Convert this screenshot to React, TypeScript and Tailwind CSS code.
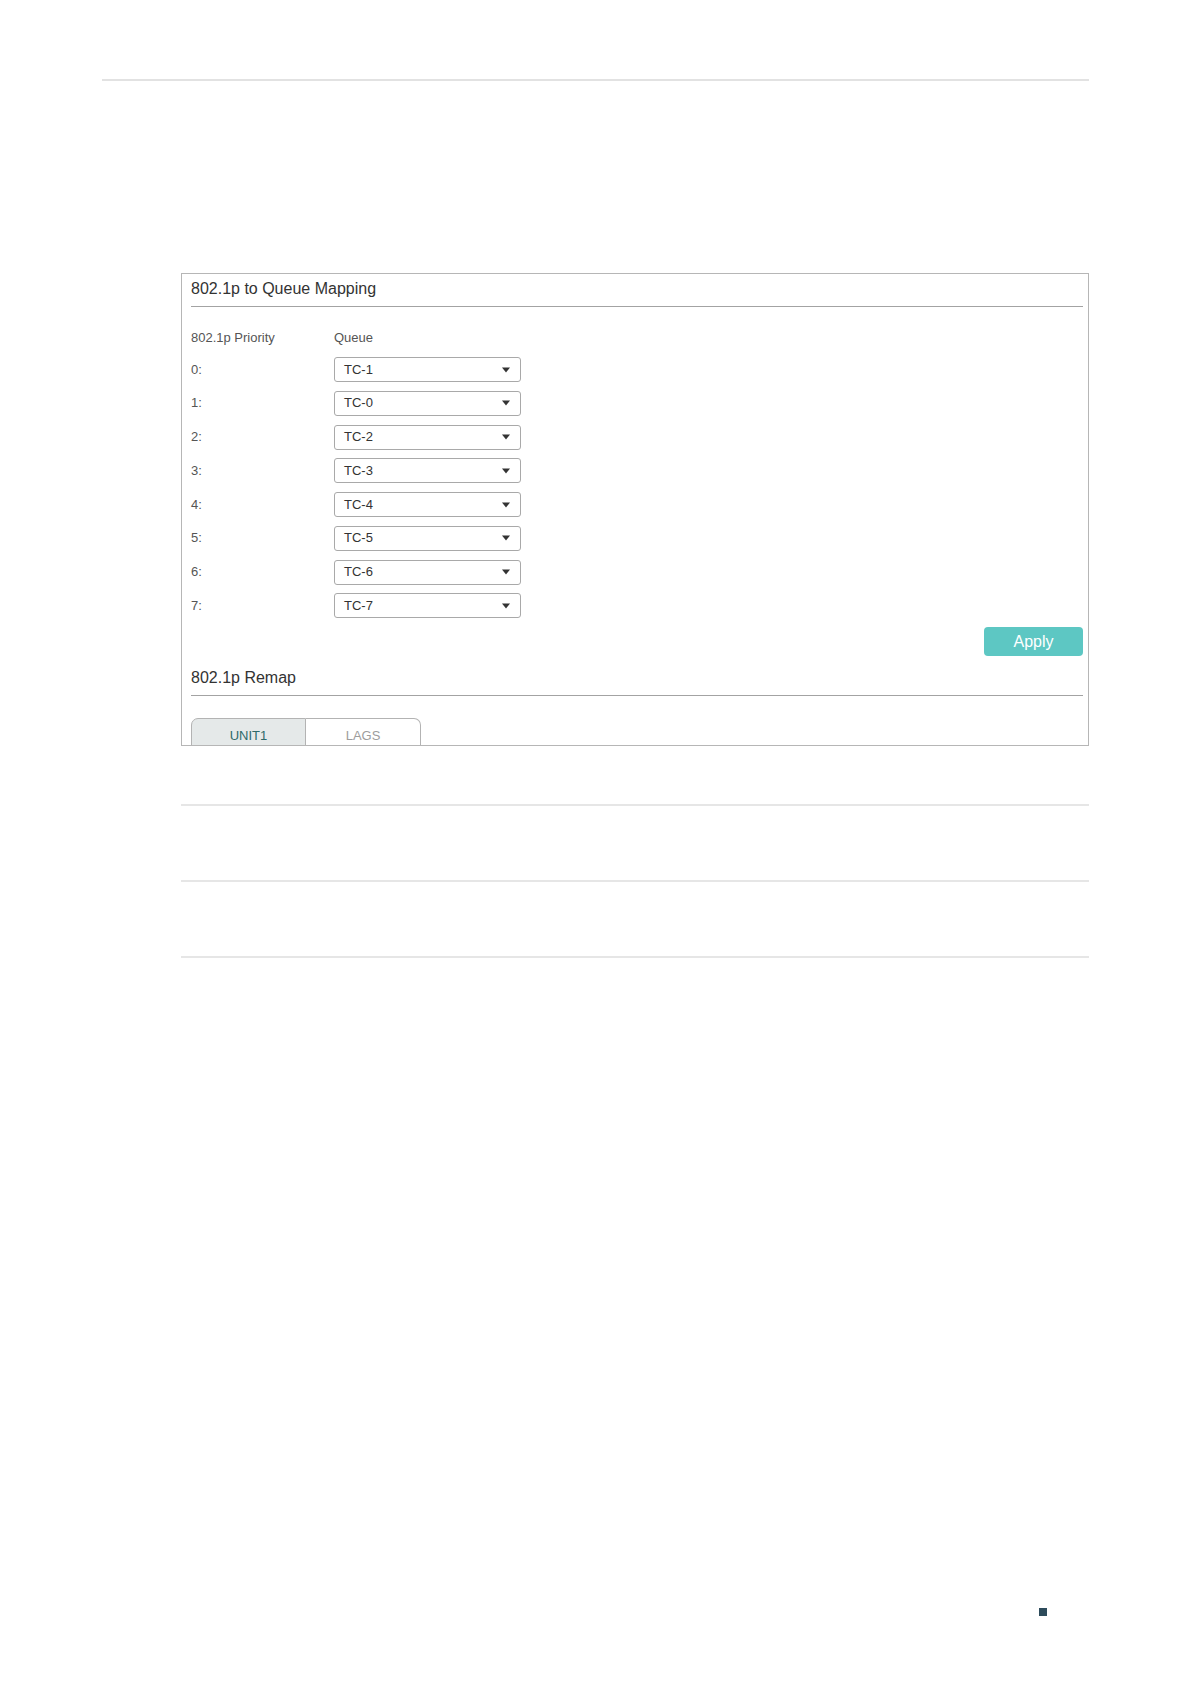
import React from "react";

const mapping = [
  { priority: "0:", queue: "TC-1" },
  { priority: "1:", queue: "TC-0" },
  { priority: "2:", queue: "TC-2" },
  { priority: "3:", queue: "TC-3" },
  { priority: "4:", queue: "TC-4" },
  { priority: "5:", queue: "TC-5" },
  { priority: "6:", queue: "TC-6" },
  { priority: "7:", queue: "TC-7" },
];

function QueueSelect({ value }: { value: string }) {
  return (
    <div className="flex h-[25px] w-[187px] items-center justify-between rounded-[3px] border border-[#a9a9a9] bg-white pl-[9px] pr-[10px] text-[13px] leading-[16px] text-[#333]">
      <span>{value}</span>
      <svg width="8" height="6" viewBox="0 0 8 6">
        <path d="M0 0.5h8L4 5.5z" fill="#333" />
      </svg>
    </div>
  );
}

export default function App() {
  return (
    <div
      className="relative h-[1684px] w-[1191px] overflow-hidden bg-white pt-[79px]"
      style={{ fontFamily: '"Liberation Sans", Arial, sans-serif' }}
    >
      <div className="ml-[102px] h-[2px] w-[987px] bg-[#e2e2e2]" />

      <div className="ml-[181px] mt-[192px] h-[473px] w-[908px] overflow-hidden border border-[#b6b6b6] pl-[9px] pr-[5px]">
        <div className="pt-[5px] text-[16px] leading-[20px] text-[#333]">802.1p to Queue Mapping</div>
        <div className="mt-[7px] h-px bg-[#a3a3a3]" />

        <div className="mt-[23px] flex text-[13px] leading-[16px] text-[#555]">
          <div className="w-[143px]">802.1p Priority</div>
          <div>Queue</div>
        </div>

        <div className="mt-[11px] flex flex-col gap-[8.75px]">
          {mapping.map((row) => (
            <div key={row.priority} className="flex items-center">
              <div className="w-[143px] text-[13px] leading-[16px] text-[#555]">{row.priority}</div>
              <QueueSelect value={row.queue} />
            </div>
          ))}
        </div>

        <div className="mt-[9px] flex justify-end">
          <button className="h-[29px] w-[99px] rounded-[4px] bg-[#5dc7c3] text-[16px] leading-[20px] text-white">
            Apply
          </button>
        </div>

        <div className="mt-[12px] text-[16px] leading-[20px] text-[#333]">802.1p Remap</div>
        <div className="mt-[7px] h-px bg-[#a3a3a3]" />

        <div className="mt-[22px] flex">
          <div className="flex h-[34px] w-[115px] justify-center rounded-tl-[7px] border border-[#b3b3b3] bg-[#e5e9e9] pt-[9px] text-[13px] leading-[16px] text-[#2e6a6a]">
            UNIT1
          </div>
          <div className="flex h-[34px] w-[115px] justify-center rounded-tr-[7px] border border-l-0 border-[#b3b3b3] bg-white pt-[9px] text-[13px] leading-[16px] text-[#9d9d9d]">
            LAGS
          </div>
        </div>
      </div>

      <div className="ml-[181px] mt-[58px] h-[2px] w-[908px] bg-[#e6e6e6]" />
      <div className="ml-[181px] mt-[74px] h-[2px] w-[908px] bg-[#e6e6e6]" />
      <div className="ml-[181px] mt-[74px] h-[2px] w-[908px] bg-[#e6e6e6]" />

      <div className="ml-[1039px] mt-[650px] h-[8px] w-[8px] bg-[#2d4b5b]" />
    </div>
  );
}
